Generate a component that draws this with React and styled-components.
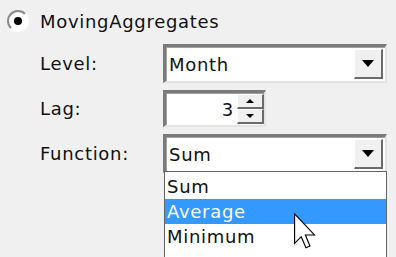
import React from 'react'
import styled, { createGlobalStyle } from 'styled-components'

const Global = createGlobalStyle`
  html, body {
    margin: 0;
    padding: 0;
    background: #f0f0f0;
    overflow: hidden;
  }
  body {
    width: 396px;
    height: 257px;
    font-family: "DejaVu Sans", Verdana, sans-serif;
    font-size: 18px;
    letter-spacing: 0.7px;
    color: #111;
  }
`;

const Page = styled.div`
  padding: 8px 0 0 7px;
`;

const TitleRow = styled.div`
  display: flex;
  align-items: center;
  gap: 11px;
  height: 26px;
  margin-bottom: 10px;
`;

const Radio = styled.span`
  box-sizing: border-box;
  width: 22px;
  height: 22px;
  border-radius: 50%;
  border: 2px solid;
  border-color: #8a8a8a #fff #fff #8a8a8a;
  background: #fff;
  display: flex;
  align-items: center;
  justify-content: center;
  &::after {
    content: '';
    width: 8px;
    height: 8px;
    border-radius: 50%;
    background: #000;
  }
`;

const Form = styled.div`
  display: grid;
  grid-template-columns: 123px 224px;
  grid-template-rows: 39px 37px 39px;
  row-gap: 7px;
  padding-left: 33px;
`;

const Label = styled.div`
  display: flex;
  align-items: center;
`;

const Field = styled.div`
  position: relative;
  box-sizing: border-box;
  width: ${({ $w }) => $w || '224px'};
  height: 100%;
  background: #fff;
  border-style: solid;
  border-width: 3px 2px 2px 3px;
  border-color: #7a7a7a #e3e3e3 #e3e3e3 #7a7a7a;
  box-shadow: inset 1px 1px 0 #a0a0a0;
  display: flex;
  align-items: center;
`;

const Value = styled.div`
  flex: 1;
  padding: 0 ${({ $right }) => ($right ? '3px' : '0')} 0 ${({ $right }) => ($right ? '0' : '3px')};
  text-align: ${({ $right }) => ($right ? 'right' : 'left')};
  white-space: nowrap;
`;

const DropButton = styled.div`
  box-sizing: border-box;
  width: 29px;
  align-self: stretch;
  margin: 2px 2px 2px 0;
  background: #f0f0f0;
  border-style: solid;
  border-width: 1px 2px 2px 1px;
  border-color: #fff #6b6b6b #6b6b6b #fff;
  display: flex;
  align-items: center;
  justify-content: center;
  &::after {
    content: '';
    border-left: 6px solid transparent;
    border-right: 6px solid transparent;
    border-top: 7px solid #000;
  }
`;

const Spin = styled.div`
  display: flex;
  flex-direction: column;
  width: 27px;
  margin: 1px 0;
  align-self: stretch;
`;

const SpinButton = styled.div`
  flex: 1;
  box-sizing: border-box;
  background: #f0f0f0;
  border-style: solid;
  border-width: 1px 2px 2px 1px;
  border-color: #fff #6b6b6b #6b6b6b #fff;
  display: flex;
  align-items: center;
  justify-content: center;
  &::after {
    content: '';
    border-left: 4px solid transparent;
    border-right: 4px solid transparent;
    ${({ $up }) => ($up ? 'border-bottom: 4px solid #000;' : 'border-top: 4px solid #000;')}
  }
`;

const List = styled.div`
  position: absolute;
  top: 100%;
  left: -2px;
  width: 223px;
  height: 90px;
  box-sizing: border-box;
  background: #fff;
  border: 1px solid #646464;
  border-bottom: none;
  padding-top: 2px;
  z-index: 2;
`;

const Item = styled.div`
  height: 25px;
  line-height: 25px;
  padding-left: 2px;
  background: ${({ $active }) => ($active ? '#3399ff' : 'transparent')};
  color: ${({ $active }) => ($active ? '#fff' : '#111')};
`;

const Cursor = styled.svg`
  position: absolute;
  left: 128px;
  top: 41px;
  z-index: 3;
`;

export default function App() {
  return (
    <>
      <Global />
      <Page>
        <TitleRow>
          <Radio />
          <span>MovingAggregates</span>
        </TitleRow>
        <Form>
          <Label>Level:</Label>
          <Field>
            <Value>Month</Value>
            <DropButton />
          </Field>
          <Label>Lag:</Label>
          <Field $w="103px">
            <Value $right>3</Value>
            <Spin>
              <SpinButton $up />
              <SpinButton />
            </Spin>
          </Field>
          <Label>Function:</Label>
          <Field>
            <Value>Sum</Value>
            <DropButton />
            <List>
              <Item>Sum</Item>
              <Item $active>Average</Item>
              <Item>Minimum</Item>
              <Cursor width="24" height="36" viewBox="0 0 12 19">
                <path d="M0.5 0.5 L0.5 16 L4 12.5 L6.5 18.3 L8.6 17.4 L6.2 11.6 L11 11.6 Z" fill="#fff" stroke="#000" strokeWidth="0.6" strokeLinejoin="miter" />
              </Cursor>
            </List>
          </Field>
        </Form>
      </Page>
    </>
  )
}
